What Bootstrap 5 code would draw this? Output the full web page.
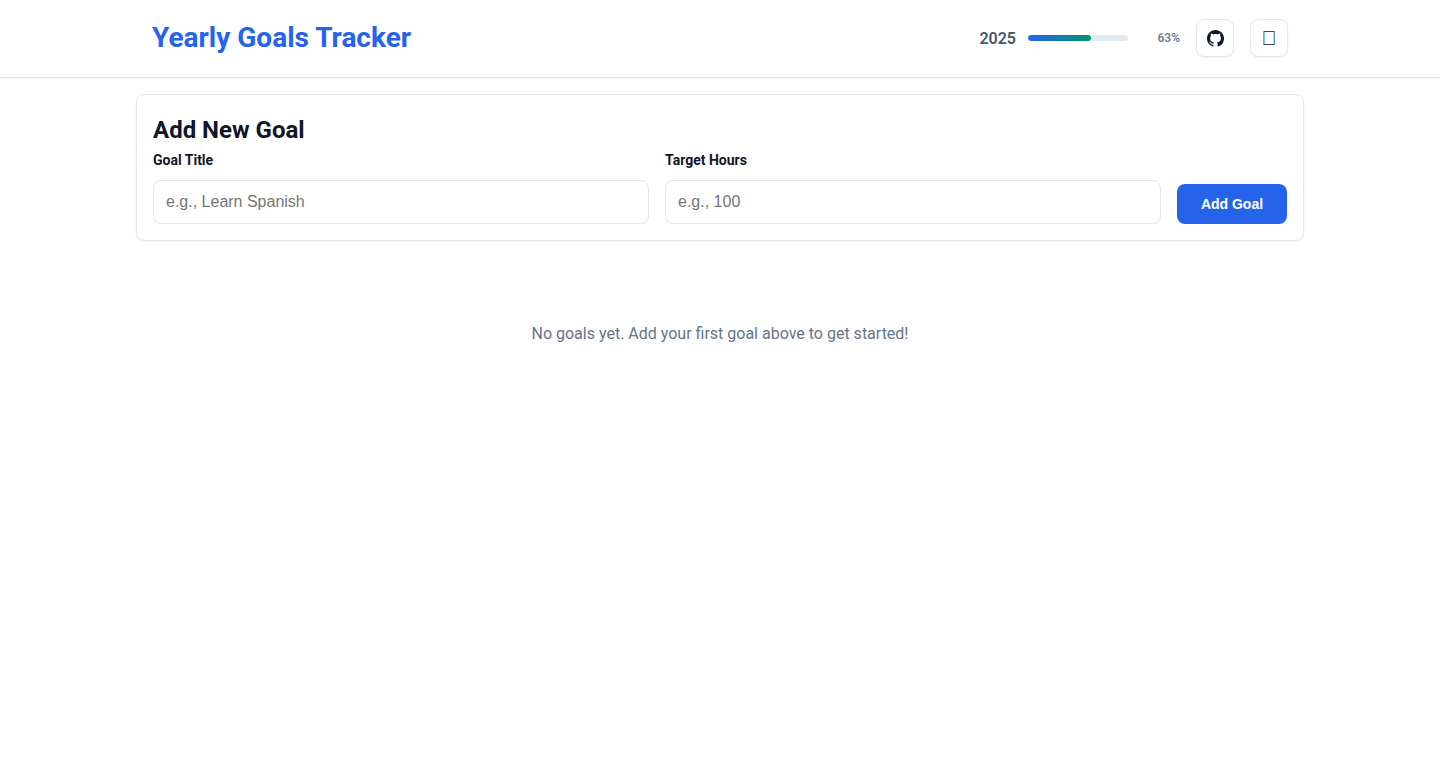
<!DOCTYPE html>
<html lang="en">
<head>
<meta charset="utf-8">
<title>Yearly Goals Tracker</title>
<link rel="stylesheet" href="https://cdn.jsdelivr.net/npm/bootstrap@5.3.0/dist/css/bootstrap.min.css">
<style>
body{font-family:Roboto,sans-serif;background:#fff;color:#0f172a;font-size:16px;line-height:1.6}
.top-bar{height:78px;border-bottom:1px solid #e2e8f0;background:#fff;box-shadow:0 1px 2px rgba(0,0,0,.05)}
.top-inner{max-width:1168px;margin:0 auto;padding:0 16px;height:76px}
.app-title{font-size:28px;font-weight:700;line-height:1.6;color:#2563eb;margin:0}
.year-label{font-size:16px;font-weight:600;color:#475569;margin-right:12px;padding-top:2px}
.track{width:100px;height:6px;border-radius:3px;background:#e2e8f0;overflow:hidden}
.fill{height:100%;background:linear-gradient(90deg,#2563eb,#059669);border-radius:3px}
.pct{width:40px;margin-left:12px;padding-top:2px;text-align:right;font-size:12px;font-weight:500;color:#64748b}
.icon-square{width:38px;height:38px;padding:0;border:1px solid #e2e8f0;border-radius:8px;background:#fff;color:#0f172a;font-size:20px;font-family:"Liberation Sans",sans-serif;box-shadow:0 1px 2px rgba(0,0,0,.05)}
.icon-square svg{width:17px;height:17px;fill:#0f172a;display:block}
.main-wrap{max-width:1168px;margin:0 auto}
.goal-form-card{margin-top:16px;padding:16px;border:1px solid #e2e8f0;border-radius:8px;background:#fff;box-shadow:0 1px 2px rgba(0,0,0,.05)}
.form-title{font-size:24px;font-weight:700;line-height:1.6;margin:0;color:#0f172a}
.field-label{display:block;font-size:14px;font-weight:700;line-height:1.6;margin-bottom:8px;color:#0f172a}
.field-input{height:44px;padding:0 12px;border:1px solid #e2e8f0;border-radius:8px;font-family:"Liberation Sans",sans-serif;font-size:16px;color:#0f172a;width:100%}
.field-input::placeholder{color:#757575;opacity:1}
.add-btn{width:110px;height:40px;padding:0;border:0;border-radius:8px;background:#2563eb;color:#fff;font-family:"Liberation Sans",sans-serif;font-size:14px;font-weight:700}
.empty-note{margin:0;padding-top:80px;text-align:center;color:#64748b;font-size:16px}
</style>
</head>
<body>
<header class="top-bar">
  <div class="top-inner d-flex align-items-center justify-content-between">
    <h1 class="app-title">Yearly Goals Tracker</h1>
    <div class="d-flex align-items-center gap-3">
      <div class="d-flex align-items-center">
        <span class="year-label">2025</span>
        <div class="track"><div class="fill" style="width:63%"></div></div>
        <span class="pct">63%</span>
      </div>
      <button class="icon-square d-flex align-items-center justify-content-center" type="button" aria-label="GitHub">
        <svg viewBox="0 0 16 16" aria-hidden="true"><path d="M8 0C3.58 0 0 3.58 0 8c0 3.54 2.29 6.53 5.47 7.59.4.07.55-.17.55-.38 0-.19-.01-.82-.01-1.49-2.01.37-2.53-.49-2.69-.94-.09-.23-.48-.94-.82-1.13-.28-.15-.68-.52-.01-.53.63-.01 1.08.58 1.23.82.72 1.21 1.87.87 2.33.66.07-.52.28-.87.51-1.07-1.78-.2-3.64-.89-3.64-3.95 0-.87.31-1.59.82-2.15-.08-.2-.36-1.02.08-2.12 0 0 .67-.21 2.2.82.64-.18 1.32-.27 2-.27.68 0 1.36.09 2 .27 1.53-1.04 2.2-.82 2.2-.82.44 1.1.16 1.92.08 2.12.51.56.82 1.27.82 2.15 0 3.07-1.87 3.75-3.65 3.95.29.25.54.73.54 1.48 0 1.07-.01 1.93-.01 2.2 0 .21.15.46.55.38A8.013 8.013 0 0016 8c0-4.42-3.58-8-8-8z"/></svg>
      </button>
      <button class="icon-square d-flex align-items-center justify-content-center" type="button" aria-label="Toggle theme">&#xE000;</button>
    </div>
  </div>
</header>
<main class="main-wrap">
  <section class="goal-form-card">
    <h2 class="form-title">Add New Goal</h2>
    <form class="d-flex align-items-end gap-3">
      <div class="w-100">
        <label class="field-label" for="g1">Goal Title</label>
        <input id="g1" class="field-input" type="text" placeholder="e.g., Learn Spanish">
      </div>
      <div class="w-100">
        <label class="field-label" for="g2">Target Hours</label>
        <input id="g2" class="field-input" type="text" placeholder="e.g., 100">
      </div>
      <button class="add-btn flex-shrink-0" type="button">Add Goal</button>
    </form>
  </section>
  <p class="empty-note">No goals yet. Add your first goal above to get started!</p>
</main>
<script src="https://cdn.jsdelivr.net/npm/bootstrap@5.3.0/dist/js/bootstrap.bundle.min.js"></script>
</body>
</html>
